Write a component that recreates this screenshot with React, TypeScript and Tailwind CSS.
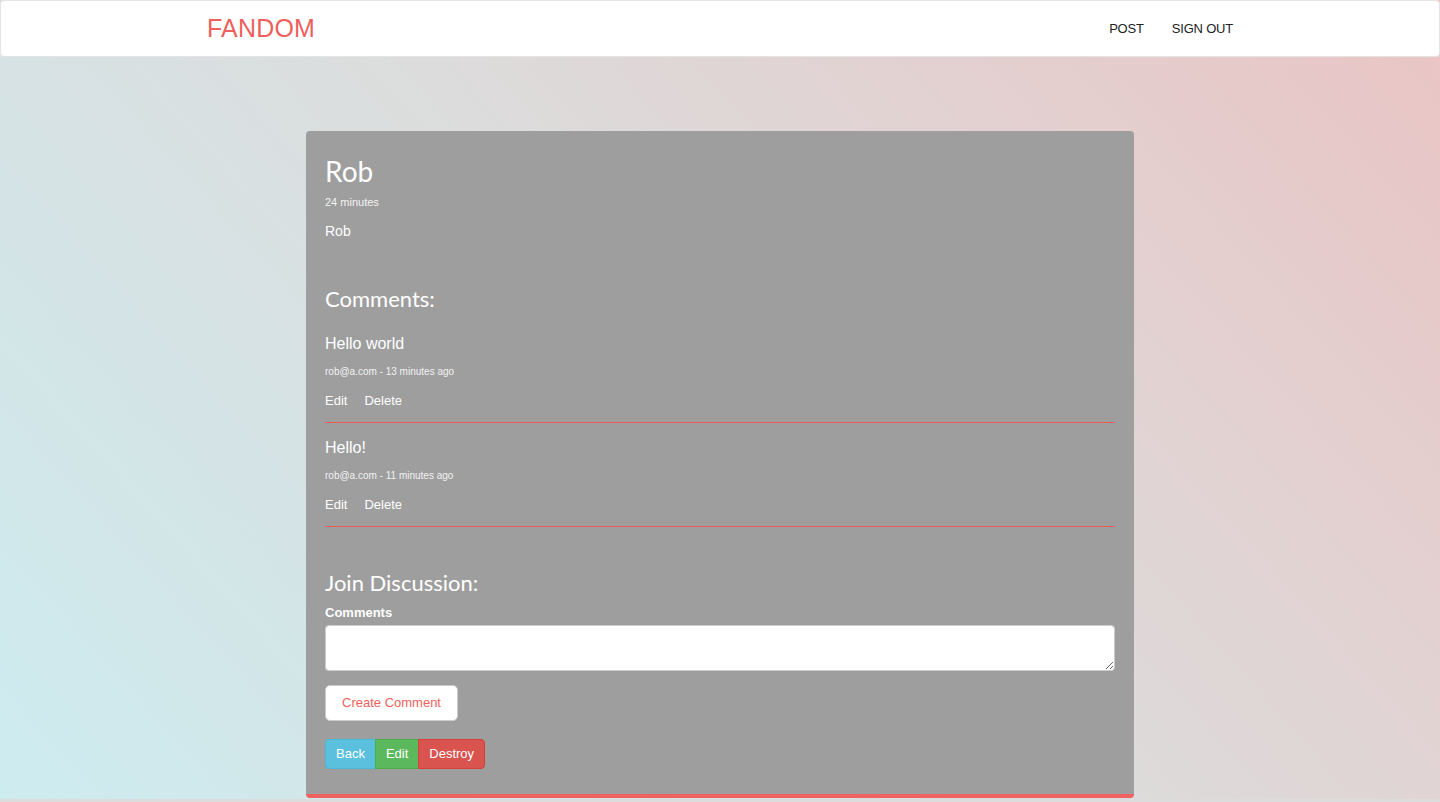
export default function App() {
  const comments = [
    { body: "Hello world", meta: "rob@a.com - 13 minutes ago" },
    { body: "Hello!", meta: "rob@a.com - 11 minutes ago" },
  ];

  return (
    <div className="min-h-screen flex flex-col bg-[linear-gradient(48deg,#cdecf0_0%,#dcdcdc_50%,#eac4c4_100%)] font-['Liberation_Sans',Arial,sans-serif]">
      {/* Navbar */}
      <div className="h-[57px] bg-white border border-[#e4e4e4] rounded-[4px]">
        <div className="w-[1026px] mx-auto h-full flex items-center justify-between">
          <span className="text-[25px] text-[#ef5f5c] tracking-[0.2px]">FANDOM</span>
          <div className="flex items-center gap-[28px] text-[13px] text-[#222] tracking-[-0.2px]">
            <span>POST</span>
            <span>SIGN OUT</span>
          </div>
        </div>
      </div>

      {/* Post card */}
      <div className="w-[828px] mx-auto mt-[74px] bg-[#9e9e9e] rounded-[4px] border-b-4 border-[#f0625f] px-[19px] pt-[23px] pb-[25px] text-white">
        <h1 className="font-['Lato',sans-serif] text-[28px] leading-[34px]">Rob</h1>
        <p className="mt-[6px] text-[11px] leading-[16px] text-[#f4f4f4]">24 minutes</p>
        <p className="mt-[11px] text-[14px] leading-[20px]">Rob</p>

        <h3 className="mt-[44px] font-['Lato',sans-serif] text-[22px] leading-[28px]">Comments:</h3>
        <div className="mt-[20px]">
          {comments.map((c, i) => (
            <div key={i} className={i > 0 ? "pt-[14px]" : ""}>
              <p className="text-[16px] leading-[22px]">{c.body}</p>
              <p className="mt-[10px] text-[10px] leading-[14px] text-[#f2f2f2]">{c.meta}</p>
              <div className="mt-[13px] flex gap-[17px] text-[13px] leading-[18px]">
                <span>Edit</span>
                <span>Delete</span>
              </div>
              <hr className="mt-[12px] border-0 h-px bg-[#f25c58]" />
            </div>
          ))}
        </div>

        <h3 className="mt-[42px] font-['Lato',sans-serif] text-[22px] leading-[28px]">Join Discussion:</h3>
        <label className="block mt-[8px] text-[13px] leading-[16px] font-bold">Comments</label>
        <textarea className="mt-[4px] block w-full h-[46px] bg-white border border-[#cccccc] rounded-[4px] text-[#333] text-[13px] px-3 py-1.5 outline-none" />

        <button className="mt-[14px] h-[36px] px-[16px] bg-white border border-[#cccccc] rounded-[5px] text-[13px] text-[#ef5f5c]">
          Create Comment
        </button>

        <div className="mt-[18px] flex text-[13px] text-white">
          <button className="h-[30px] px-[10px] bg-[#5bc0de] border border-[#46b8da] rounded-l-[4px]">Back</button>
          <button className="h-[30px] px-[10px] bg-[#5cb85c] border border-[#4cae4c] -ml-px">Edit</button>
          <button className="h-[30px] px-[10px] bg-[#d9534f] border border-[#d43f3a] rounded-r-[4px] -ml-px">Destroy</button>
        </div>
      </div>

      <div className="mt-[1px] h-[4px] bg-[#dcdcdc]" />
    </div>
  );
}
